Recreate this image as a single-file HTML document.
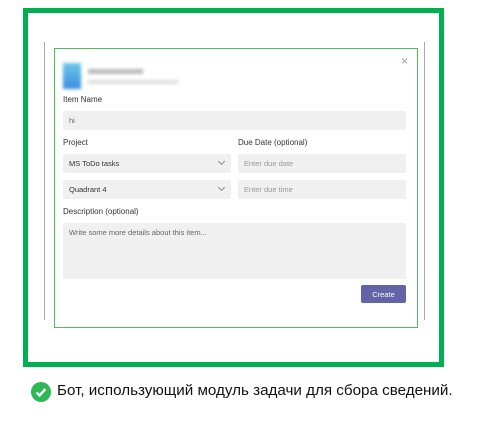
<!DOCTYPE html>
<html><head><meta charset="utf-8"><style>
*{margin:0;padding:0;box-sizing:border-box}
body{width:482px;height:422px;background:#fff;position:relative;font-family:"Liberation Sans",sans-serif;overflow:hidden}
.a{position:absolute}
.lbl{font-size:8px;color:#333}
.in{background:#f0f0f0;border-radius:2px;font-size:7.5px;color:#666;padding-left:6px;display:flex;align-items:center}
.chev{position:absolute;right:7px;top:5px;width:5px;height:5px;border-right:1px solid #888;border-bottom:1px solid #888;transform:rotate(45deg)}
</style></head><body>
<div class="a" style="left:23px;top:8px;width:421px;height:359px;border:5px solid #00b050"></div>
<div class="a" style="left:44px;top:42px;width:1px;height:278px;background:#aaa"></div>
<div class="a" style="left:424px;top:42px;width:1px;height:278px;background:#aaa"></div>
<div class="a" style="left:54px;top:48px;width:364px;height:280px;border:1.5px solid #4cbe5c"></div>
<div class="a" style="left:401px;top:54px;font-size:12px;color:#999">×</div>
<div class="a" style="left:63px;top:63px;width:18px;height:26px;background:linear-gradient(#6cc8e8,#3a8fe0);filter:blur(1.5px)"></div>
<div class="a" style="left:88px;top:69px;width:55px;height:5px;background:#bbb;filter:blur(1.5px)"></div>
<div class="a" style="left:88px;top:80px;width:90px;height:4px;background:#ddd;filter:blur(1.5px)"></div>
<div class="a lbl" style="left:63px;top:95px">Item Name</div>
<div class="a in" style="left:63px;top:111px;width:343px;height:19px">hi</div>
<div class="a lbl" style="left:63px;top:138px">Project</div>
<div class="a lbl" style="left:238px;top:138px">Due Date (optional)</div>
<div class="a in" style="left:63px;top:154px;width:168px;height:19px;color:#333">MS ToDo tasks<div class="chev"></div></div>
<div class="a in" style="left:238px;top:154px;width:168px;height:19px;color:#999">Enter due date</div>
<div class="a in" style="left:63px;top:180px;width:168px;height:19px;color:#333">Quadrant 4<div class="chev"></div></div>
<div class="a in" style="left:238px;top:180px;width:168px;height:19px;color:#999">Enter due time</div>
<div class="a lbl" style="left:63px;top:207px">Description (optional)</div>
<div class="a in" style="left:63px;top:223px;width:343px;height:56px;align-items:flex-start;padding-top:5px">Write some more details about this item...</div>
<div class="a" style="left:361px;top:285px;width:45px;height:18px;background:#6264a7;border-radius:2px;color:#fff;font-size:7.5px;display:flex;align-items:center;justify-content:center">Create</div>
<svg class="a" style="left:31px;top:382px" width="20" height="20" viewBox="0 0 20 20"><circle cx="10" cy="10" r="10" fill="#2eb855"/><path d="M5.5 10.5l3 3 6-6.5" stroke="#fff" stroke-width="2.4" fill="none"/></svg>
<div class="a" style="left:57px;top:382px;font-size:15.2px;color:#111;white-space:nowrap">Бот, использующий модуль задачи для сбора сведений.</div>
</body></html>
